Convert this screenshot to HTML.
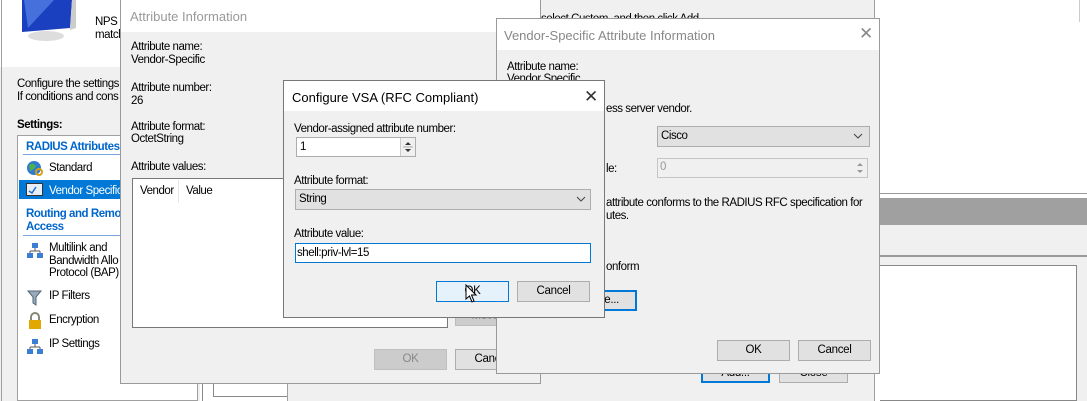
<!DOCTYPE html>
<html><head><meta charset="utf-8"><style>
*{box-sizing:border-box;margin:0;padding:0}
body{width:1087px;height:401px;position:relative;overflow:hidden;background:#fff;font-family:"Liberation Sans",sans-serif;font-size:12px;color:#000}
.a{position:absolute}
.t{position:absolute;white-space:nowrap;line-height:13px;font-size:11.5px;letter-spacing:-0.45px}
.tt{font-size:13px;letter-spacing:0}
.btn{position:absolute;background:#e1e1e1;border:1px solid #adadad;text-align:center;line-height:19px;font-size:11.5px;letter-spacing:-0.3px}
.win{position:absolute;background:#f0f0f0;border:1px solid #9a9a9a}
.title{position:absolute;left:0;right:0;top:0;background:#fff}
.x{position:absolute;font-size:17px;color:#333;line-height:17px}
</style></head><body>

<div class="a" style="left:0;top:0;width:200px;height:401px;background:#f0f0f0"></div>
<div class="a" style="left:0;top:0;width:200px;height:67px;background:#fff"></div>
<div class="a" style="left:1px;top:0;width:1px;height:401px;background:#a0a0a0"></div>
<svg class="a" style="left:14px;top:0" width="65" height="42"><path d="M8 0 L58 0 L56 28 L8 32 Z" fill="#1a3fbf"/><path d="M10 0 L40 0 L14 28 Z" fill="#5a86e8" opacity=".7"/><path d="M58 0 L62 0 L62 28 L56 30 Z" fill="#ccc"/><ellipse cx="32" cy="36" rx="18" ry="5" fill="#ddd"/></svg>
<div class="t" style="left:95px;top:16px">NPS a</div>
<div class="t" style="left:95px;top:29px">match</div>
<div class="t" style="left:17px;top:78px">Configure the settings</div>
<div class="t" style="left:17px;top:91px">If conditions and cons</div>
<div class="t" style="left:17px;top:119px;font-weight:bold">Settings:</div>
<div class="a" style="left:17px;top:135px;width:181px;height:266px;background:#fff;border:1px solid #a0a0a0"></div>
<div class="t" style="left:26px;top:141px;color:#0066cc;font-weight:bold">RADIUS Attributes</div>
<div class="a" style="left:23px;top:154px;width:100px;height:1px;background:#7aa7de"></div>
<svg class="a" style="left:26px;top:160px" width="18" height="18"><circle cx="8" cy="8" r="7" fill="#2e7bcf"/><path d="M3 5 Q7 2 10 6 Q8 10 4 11Z" fill="#4caf50"/><circle cx="13" cy="12" r="3" fill="none" stroke="#d4a017" stroke-width="2"/></svg>
<div class="t" style="left:49px;top:162px">Standard</div>
<div class="a" style="left:19px;top:180px;width:102px;height:19px;background:#0078d7"></div>
<svg class="a" style="left:26px;top:183px" width="18" height="14"><rect x="0.5" y="0.5" width="16" height="12" fill="#e8eef5" stroke="#333"/><path d="M3 8 L6 10 L10 4" stroke="#1e6fd0" stroke-width="1.5" fill="none"/></svg>
<div class="t" style="left:49px;top:185px;color:#fff">Vendor Specific</div>
<div class="t" style="left:26px;top:208px;color:#0066cc;font-weight:bold">Routing and Remo</div>
<div class="t" style="left:26px;top:221px;color:#0066cc;font-weight:bold">Access</div>
<div class="a" style="left:23px;top:235px;width:100px;height:1px;background:#7aa7de"></div>
<svg class="a" style="left:26px;top:242px" width="18" height="18"><rect x="6" y="1" width="6" height="5" fill="#3b7fd4"/><rect x="1" y="11" width="6" height="5" fill="#3b7fd4"/><rect x="11" y="11" width="6" height="5" fill="#3b7fd4"/><path d="M9 6V9M4 9H14M4 9V11M14 9V11" stroke="#555"/></svg>
<div class="t" style="left:49px;top:242px">Multilink and</div>
<div class="t" style="left:49px;top:255px">Bandwidth Allo</div>
<div class="t" style="left:49px;top:267px">Protocol (BAP)</div>
<svg class="a" style="left:27px;top:290px" width="16" height="16"><path d="M1 1H14L9 7V15L6 13V7Z" fill="#9ab" stroke="#567"/></svg>
<div class="t" style="left:49px;top:290px">IP Filters</div>
<svg class="a" style="left:27px;top:312px" width="16" height="18"><path d="M4 8V5A4 4 0 0 1 12 5V8" stroke="#887" stroke-width="2" fill="none"/><rect x="2" y="8" width="12" height="9" fill="#e0a800"/></svg>
<div class="t" style="left:49px;top:314px">Encryption</div>
<svg class="a" style="left:26px;top:338px" width="18" height="18"><rect x="6" y="1" width="6" height="5" fill="#3b7fd4"/><rect x="1" y="11" width="6" height="5" fill="#3b7fd4"/><rect x="11" y="11" width="6" height="5" fill="#3b7fd4"/><path d="M9 6V9M4 9H14M4 9V11M14 9V11" stroke="#555"/></svg>
<div class="t" style="left:49px;top:338px">IP Settings</div>

<div class="a" style="left:202px;top:383px;width:1px;height:18px;background:#888"></div>
<div class="a" style="left:213px;top:383px;width:1px;height:14px;background:#888"></div>
<div class="a" style="left:213px;top:396px;width:80px;height:1px;background:#888"></div>

<div class="a" style="left:287px;top:0;width:587px;height:401px;background:#f0f0f0;border-left:1px solid #a0a0a0"></div>
<div class="a" style="left:480px;top:0;width:61px;height:30px;background:#fff"></div>
<div class="x" style="left:519px;top:6px;color:#999">✕</div>
<div class="t" style="left:541px;top:13px">select Custom, and then click Add</div>
<div class="btn" style="left:701px;top:363px;width:69px;height:20px;border:2px solid #0078d7;line-height:16px">Add...</div>
<div class="btn" style="left:779px;top:363px;width:69px;height:20px">Close</div>
<div class="a" style="left:874px;top:0;width:1px;height:401px;background:#a0a0a0"></div>
<div class="a" style="left:1079px;top:0;width:1px;height:22px;background:#ccc"></div>
<div class="a" style="left:880px;top:193px;width:207px;height:1px;background:#999"></div>
<div class="a" style="left:880px;top:198px;width:207px;height:27px;background:#a0a0a0"></div>
<div class="a" style="left:880px;top:225px;width:207px;height:30px;background:#f0f0f0"></div>
<div class="a" style="left:880px;top:255px;width:207px;height:2px;background:#999"></div>
<div class="a" style="left:880px;top:257px;width:207px;height:144px;background:#f0f0f0"></div>
<div class="a" style="left:880px;top:265px;width:197px;height:136px;background:#fff;border:1px solid #888;border-left:none"></div>

<div class="win" style="left:120px;top:-1px;width:421px;height:385px">
  <div class="title" style="height:32px"></div>
  <div class="t tt" style="left:9px;top:10px;color:#999">Attribute Information</div>
  <div class="t" style="left:10px;top:41px">Attribute name:</div>
  <div class="t" style="left:10px;top:54px">Vendor-Specific</div>
  <div class="t" style="left:10px;top:82px">Attribute number:</div>
  <div class="t" style="left:10px;top:95px">26</div>
  <div class="t" style="left:10px;top:121px">Attribute format:</div>
  <div class="t" style="left:10px;top:133px">OctetString</div>
  <div class="t" style="left:10px;top:161px">Attribute values:</div>
  <div class="a" style="left:11px;top:178px;width:316px;height:150px;background:#fff;border:1px solid #777"></div>
  <div class="t" style="left:19px;top:185px">Vendor</div>
  <div class="a" style="left:57px;top:180px;width:1px;height:23px;background:#e5e5e5"></div>
  <div class="t" style="left:65px;top:185px">Value</div>
  <div class="btn" style="left:334px;top:306px;width:60px;height:20px;background:#ccc;border-color:#bbb;color:#888">Move</div>
  <div class="btn" style="left:253px;top:349px;width:73px;height:21px;background:#ccc;border-color:#bfbfbf;color:#888">OK</div>
  <div class="btn" style="left:334px;top:349px;width:73px;height:21px">Cancel</div>
</div>

<div class="win" style="left:496px;top:18px;width:384px;height:356px">
  <div class="title" style="height:31px"></div>
  <div class="t tt" style="left:7px;top:10px;color:#888">Vendor-Specific Attribute Information</div>
  <div class="x" style="left:362px;top:6px;color:#888">✕</div>
  <div class="t" style="left:10px;top:42px">Attribute name:</div>
  <div class="t" style="left:10px;top:54px">Vendor Specific</div>
  <div class="t" style="left:109px;top:84px">ess server vendor.</div>
  <div class="a" style="left:160px;top:107px;width:213px;height:21px;background:#e1e1e1;border:1px solid #adadad"></div>
  <div class="t" style="left:164px;top:111px">Cisco</div>
  <svg class="a" style="left:356px;top:113px" width="10" height="8"><path d="M1 2L5 6L9 2" stroke="#444" fill="none"/></svg>
  <div class="t" style="left:109px;top:144px">le:</div>
  <div class="a" style="left:160px;top:139px;width:211px;height:20px;background:#f0f0f0;border:1px solid #c5c5c5"></div>
  <div class="t" style="left:163px;top:142px;color:#999">0</div>
  <svg class="a" style="left:357px;top:141px" width="12" height="16"><path d="M3 6L6 3L9 6Z M3 10L6 13L9 10Z" fill="#999"/></svg>
  <div class="t" style="left:109px;top:178px">attribute conforms to the RADIUS RFC specification for</div>
  <div class="t" style="left:109px;top:191px">utes.</div>
  <div class="t" style="left:109px;top:242px">onform</div>
  <div class="btn" style="left:90px;top:271px;width:50px;height:21px;border:2px solid #0078d7;line-height:17px;text-align:right;padding-right:16px">e...</div>
  <div class="btn" style="left:220px;top:321px;width:73px;height:21px">OK</div>
  <div class="btn" style="left:301px;top:321px;width:73px;height:21px">Cancel</div>
</div>

<div class="win" style="left:283px;top:80px;width:322px;height:238px;border-color:#777">
  <div class="title" style="height:30px"></div>
  <div class="t tt" style="left:8px;top:10px">Configure VSA (RFC Compliant)</div>
  <div class="x" style="left:300px;top:7px">✕</div>
  <div class="t" style="left:10px;top:42px">Vendor-assigned attribute number:</div>
  <div class="a" style="left:12px;top:56px;width:120px;height:20px;background:#fff;border:1px solid #adadad"></div>
  <div class="t" style="left:16px;top:60px">1</div>
  <div class="a" style="left:116px;top:57px;width:15px;height:18px;background:#f0f0f0;border-left:1px solid #ccc"></div>
  <svg class="a" style="left:118px;top:58px" width="12" height="16"><path d="M3 6L6 3L9 6Z M3 10L6 13L9 10Z" fill="#333"/><path d="M1 8H11" stroke="#aaa"/></svg>
  <div class="t" style="left:10px;top:94px">Attribute format:</div>
  <div class="a" style="left:11px;top:108px;width:296px;height:21px;background:#e1e1e1;border:1px solid #adadad"></div>
  <div class="t" style="left:15px;top:112px">String</div>
  <svg class="a" style="left:292px;top:114px" width="10" height="8"><path d="M1 2L5 6L9 2" stroke="#444" fill="none"/></svg>
  <div class="t" style="left:10px;top:147px">Attribute value:</div>
  <div class="a" style="left:11px;top:162px;width:296px;height:20px;background:#fff;border:1px solid #0078d7"></div>
  <div class="t" style="left:13px;top:166px">shell:priv-lvl=15</div>
  <div class="btn" style="left:152px;top:200px;width:73px;height:21px;background:#e5f1fb;border-color:#0078d7">OK</div>
  <div class="btn" style="left:233px;top:200px;width:73px;height:21px">Cancel</div>
  <svg class="a" style="left:181px;top:203px" width="14" height="20"><path d="M1 1V15L4.5 12L7 18L9 17L6.5 11H11Z" fill="#fff" stroke="#000"/></svg>
</div>

</body></html>
